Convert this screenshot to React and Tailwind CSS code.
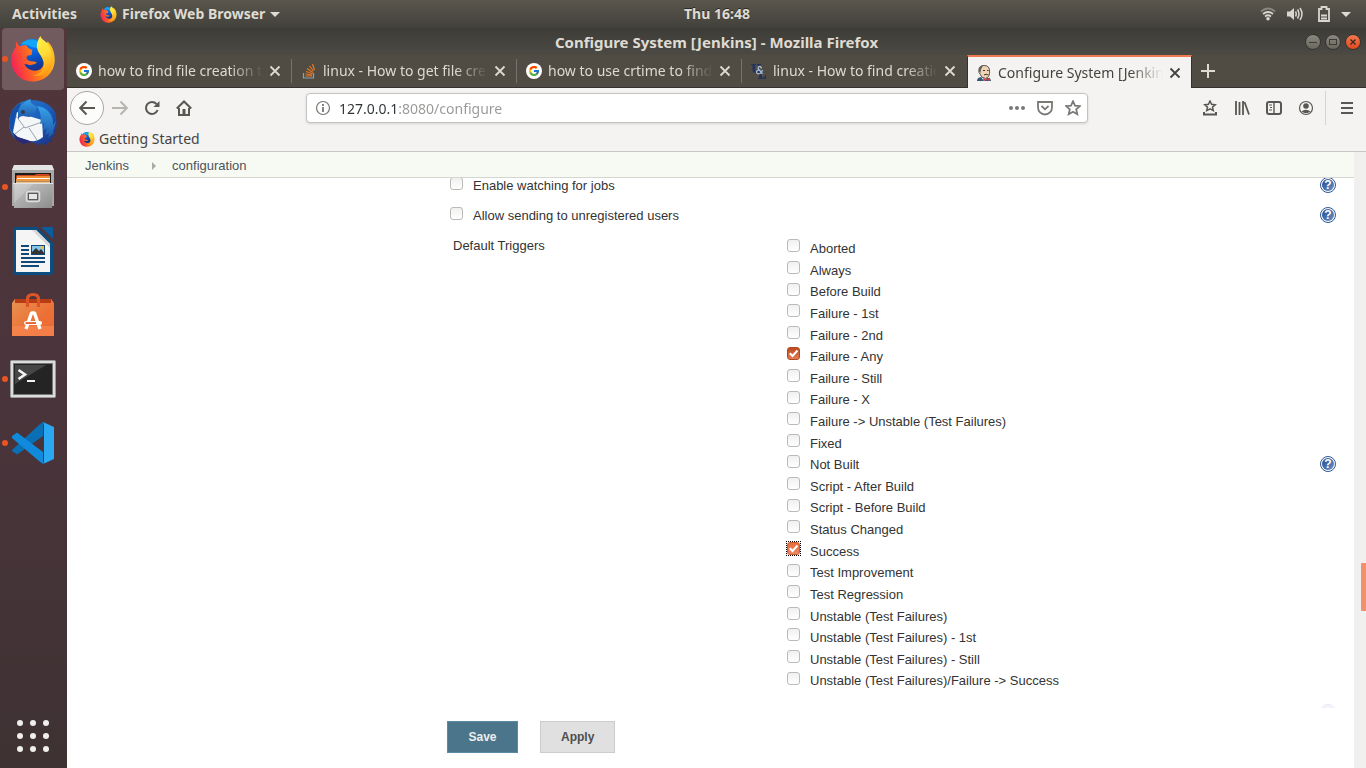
import { FcGoogle } from "react-icons/fc";

const UI = "font-['Noto_Sans','Open_Sans',sans-serif]";

function Firefox({ id, className }) {
  return (
    <svg viewBox="0 0 44 46" className={className} aria-hidden="true">
      <defs>
        <linearGradient id={id + "-globe"} x1="0.3" y1="0" x2="0.6" y2="1">
          <stop offset="0" stopColor="#0a84f5" />
          <stop offset="0.35" stopColor="#0a6bea" />
          <stop offset="0.8" stopColor="#103a9a" />
          <stop offset="1" stopColor="#2a2a80" />
        </linearGradient>
        <linearGradient id={id + "-fox"} x1="0" y1="0.6" x2="1" y2="0.3">
          <stop offset="0" stopColor="#f5205c" />
          <stop offset="0.25" stopColor="#fb4a35" />
          <stop offset="0.6" stopColor="#ff8a14" />
          <stop offset="1" stopColor="#ffc524" />
        </linearGradient>
        <linearGradient id={id + "-tail"} x1="0.2" y1="0" x2="0.5" y2="1">
          <stop offset="0" stopColor="#fff04a" />
          <stop offset="0.5" stopColor="#ffdd36" />
          <stop offset="1" stopColor="#ff9a15" />
        </linearGradient>
      </defs>
      <circle cx="22" cy="20" r="17" fill={"url(#" + id + "-globe)"} />
      <path d="M10 8C14 3 23 2 28 6l-1 6c-4 0-7-1-10-3z" fill="#12a5f7" />
      <path
        d="M5.5 5C4.500 8 5 10 5 11C2 15 0 19 .3 25C1 37 10 45.500 22 45.500C34 45.500 43.700 36 43.700 24C43.700 16 41 9 36.500 5.500L31 20C34 24 34 31 28 34C22 36 15 33 13.500 28C16 27.500 19 30 22 28.500C24 27.500 26 27.500 25.500 26.500C24 25 21 26 17.500 24.500C15 23 15 20.500 17 19.500L20.500 19C21.500 17.500 20 16.500 21.500 14C18.500 13 16.500 12 15.500 9.500C12 9 10 10 9 10.500C7 9.500 6 7.500 5.500 5Z"
        fill={"url(#" + id + "-fox)"}
      />
      <path
        d="M29.500 0C25 6 25 12 28 17C32 22 34 28 32 32C30 37 26 39 22 40C33 41 39 35 40 27C42.500 22 40 11 36 7C33 4 30 3 29.500 0Z"
        fill={"url(#" + id + "-tail)"}
      />
    </svg>
  );
}

function Thunderbird() {
  return (
    <svg viewBox="0 0 48 48" className="size-12" aria-hidden="true">
      <defs>
        <linearGradient id="tb-a" x1="0" y1="0" x2="1" y2="1">
          <stop offset="0" stopColor="#2b7fd8" />
          <stop offset="0.5" stopColor="#1c5fbd" />
          <stop offset="1" stopColor="#1b2b7d" />
        </linearGradient>
        <linearGradient id="tb-b" x1="0" y1="0" x2="0" y2="1">
          <stop offset="0" stopColor="#37a3ea" />
          <stop offset="1" stopColor="#1e55a8" />
        </linearGradient>
      </defs>
      <path d="M0 24C0 12 8 3 16 2L20 0L19 2C30-1 42 5 46 13C49 23 48 34 42 40L43 43L38 43L38 46L32 44L30 47L27 44L8 41C3 37 0 31 0 24Z" fill="url(#tb-a)" />
      <path d="M0 22C1 14 5 7 12 4L10 11C7 15 5 20 4 34C1 30 0 27 0 22Z" fill="#1550a8" />
      <path d="M8 13L13 15L33 21L34 38C28 43 22 43 18 41L8 38L4 33Z" fill="#f5f6f8" />
      <path d="M7 17L16 29L33 23M15 28L6 35M20 29L28 41" fill="none" stroke="#9aa3b0" strokeWidth="1" />
      <path d="M4 34L9 38L24 43L14 45L7 41Z" fill="#2a2a78" />
      <path d="M9 12C11 5 17 2 22 0C20 5 25 5 28 8C27 12 26 16 20 18C16 18 13 15 9 20Z" fill="url(#tb-b)" />
      <path d="M28 7C37 8 45 15 44 26L47 22L44 33L45 34L39 39L40 34L36 36L38 29L34 32L35 24L31 25C33 18 31 12 28 7Z" fill="url(#tb-b)" />
      <circle cx="14" cy="13" r="2" fill="#333b48" />
    </svg>
  );
}

function Files() {
  return (
    <svg viewBox="0 0 44 46" className="h-[46px] w-11" aria-hidden="true">
      <defs>
        <linearGradient id="fl-a" x1="0" y1="0" x2="1" y2="1">
          <stop offset="0" stopColor="#c9c9c9" />
          <stop offset="1" stopColor="#8c8c8c" />
        </linearGradient>
      </defs>
      <path d="M3 1h38l2 5v36H1V6z" fill="#a8a8a8" />
      <path d="M3 1h38l2 5H1z" fill="#e4e4e4" />
      <rect x="4" y="9" width="36" height="11" fill="#1d1b1a" />
      <path d="M5 12L6 11H24L25 10H38L39 12V15H5Z" fill="#c9491c" />
      <rect x="6" y="12" width="33" height="2" fill="#ef8a35" />
      <rect x="6" y="14" width="33" height="1" fill="#fff" />
      <rect x="5" y="15" width="34" height="2.500" fill="#f0963e" />
      <rect x="5" y="17.500" width="34" height="2" fill="#e9c48f" />
      <path d="M2 19h40l-1 25H3z" fill="url(#fl-a)" />
      <path d="M2 19h40v1H2z" fill="#e2e2e2" />
      <path d="M4 20h18L9 33l-6 6z" fill="#fff" opacity=".18" />
      <rect x="15.500" y="27.500" width="13" height="10" rx="2" fill="#999" stroke="#dedede" strokeWidth="1.500" />
      <rect x="17.500" y="29.500" width="9" height="6" fill="#e6e6e6" stroke="#5c5c5c" />
    </svg>
  );
}

function Writer() {
  return (
    <svg viewBox="0 0 42 50" className="h-[50px] w-[42px]" aria-hidden="true">
      <path d="M4 1H25L41 17V46Q41 49 38 49H4Q1 49 1 46V4Q1 1 4 1Z" fill="#0b4d80" />
      <path d="M29 1H41V13Z" fill="#0a5c9c" />
      <path d="M4 4H24L38 18V46H4Z" fill="#f5f5f5" />
      <path d="M24 4L38 18V22L20 4Z" fill="#d7d7d7" />
      <path d="M9 20h8M9 24h8M9 28h8M9 32h24M9 36h24M9 40h18" stroke="#114a78" strokeWidth="2" />
      <rect x="19.500" y="19.500" width="13" height="9" fill="#87c5ec" stroke="#114a78" />
      <path d="M20 28v-2l4-4 3 3 2-2 3 4v1z" fill="#333" />
      <circle cx="30" cy="21.500" r="1.500" fill="#f2c230" />
    </svg>
  );
}

function Software() {
  return (
    <svg viewBox="0 0 44 46" className="h-[46px] w-11" aria-hidden="true">
      <defs>
        <linearGradient id="sw-a" x1="0" y1="0" x2="1" y2="1">
          <stop offset="0" stopColor="#e69452" />
          <stop offset="0.6" stopColor="#ec7035" />
          <stop offset="1" stopColor="#ec6a33" />
        </linearGradient>
      </defs>
      <path d="M3 7H41V12H3Z" fill="#b83c13" />
      <path d="M1 11L4 7V11H40V7L43 11V44H1Z" fill="url(#sw-a)" />
      <path d="M1 34H43V44H1Z" fill="#fa8a55" opacity=".6" />
      <path d="M16.500 15V7Q16.500 2.500 22 2.500Q27.500 2.500 27.500 7V15" fill="none" stroke="#dd5527" strokeWidth="3.200" />
      <path d="M15 37L20.500 21H23.500L29 37" fill="none" stroke="#fff" strokeWidth="3.400" strokeLinejoin="bevel" />
      <rect x="13" y="29" width="18" height="4" rx="2" fill="#fff" />
      <rect x="14.500" y="30.200" width="10.500" height="1.800" fill="#e95a25" />
    </svg>
  );
}

function Terminal() {
  return (
    <svg viewBox="0 0 46 38" className="h-[38px] w-[46px]" aria-hidden="true">
      <rect x=".5" y=".5" width="45" height="37" rx="1" fill="#dcdcdc" stroke="#9a9a9a" />
      <rect x="3.500" y="3.500" width="39" height="31" fill="#242424" stroke="#777" />
      <path d="M5 5H36L5 24Z" fill="#555" opacity=".7" />
      <path d="M8.500 10L15 14.500L8.500 19" fill="none" stroke="#f3f3f3" strokeWidth="2.600" />
      <rect x="17" y="20" width="8" height="2" fill="#f3f3f3" />
    </svg>
  );
}

function VsCode() {
  return (
    <svg viewBox="0 0 42 42" className="size-[42px]" aria-hidden="true">
      <path d="M0 28L27 3L31 0V14L5 32.500L0 29Z" fill="#0a6fb5" />
      <path d="M0 14L5 10.500L31 30V42L27 39L0 16Z" fill="#118adb" />
      <path d="M31 0L42 5V37L31 42Q32 41 32 38V4Q32 1 31 0Z" fill="#2aa8f2" />
    </svg>
  );
}

const dock = [
  { name: "Firefox", icon: <Firefox id="dock" className="h-[46px] w-11" />, running: true, active: true },
  { name: "Thunderbird", icon: <Thunderbird /> },
  { name: "Files", icon: <Files />, running: true },
  { name: "LibreOffice Writer", icon: <Writer /> },
  { name: "Ubuntu Software", icon: <Software /> },
  { name: "Terminal", icon: <Terminal />, running: true },
  { name: "Visual Studio Code", icon: <VsCode />, running: true },
];

function Dock() {
  return (
    <nav aria-label="Dock" className="flex w-[67px] shrink-0 flex-col bg-gradient-to-b from-[#51363b] via-[#4a343b] to-[#3e3233] pb-[13px]">
      <div className="flex flex-col gap-[2px]">
        {dock.map((d) => (
          <button
            key={d.name}
            aria-label={d.name}
            className={
              "relative mx-[2px] flex h-[62px] w-[62px] items-center justify-center rounded " +
              (d.active ? "bg-[#715b5f]" : "")
            }
          >
            {d.running && <span className="absolute top-7 left-0 size-[6px] rounded-full bg-[#e95420]" />}
            {d.icon}
          </button>
        ))}
      </div>
      <button aria-label="Show Applications" className="mx-[14px] mt-auto grid size-[38px] grid-cols-3 place-items-center">
        {Array.from({ length: 9 }, (_, i) => (
          <span key={i} className="size-[6px] rounded-full bg-[#f0efee]" />
        ))}
      </button>
    </nav>
  );
}

function TopBar() {
  return (
    <header className="grid h-7 shrink-0 grid-cols-[1fr_auto_1fr] items-center bg-gradient-to-b from-[#5a564d] to-[#42413b] px-3 text-sm font-bold text-[#dfdbd2] [text-shadow:0_-1px_0_#2c2b28]">
      <div className="flex items-center">
        <button>Activities</button>
        <button className="ml-[23px] flex items-center gap-[5px]">
          <Firefox id="bar" className="size-[17px]" />
          Firefox Web Browser
          <svg viewBox="0 0 10 5" className="h-[5px] w-[10px]" aria-hidden="true">
            <path d="M0 0H10L5 5Z" fill="#dfdbd2" />
          </svg>
        </button>
      </div>
      <time className="pl-[68px]">Thu 16:48</time>
      <div className="flex items-center justify-end gap-[11px] pr-[3px]">
        <svg viewBox="0 0 16 14" className="h-[14px] w-4" aria-label="Wi-Fi" fill="none" stroke="#d9d6cf" strokeWidth="1.800">
          <path d="M1 4.500Q8-1.500 15 4.500" stroke="#8a877f" />
          <path d="M3 7Q8 3 13 7M5 9.500Q8 7 11 9.500" />
          <circle cx="8" cy="11.800" r="1.800" fill="#d9d6cf" stroke="none" />
        </svg>
        <svg viewBox="0 0 16 14" className="h-[14px] w-4" aria-label="Volume" fill="none" stroke="#d9d6cf" strokeWidth="1.500">
          <path d="M0 4.500H3L7 1V13L3 9.500H0Z" fill="#d9d6cf" stroke="none" />
          <path d="M8.500 4.500Q10 7 8.500 9.500M10.500 2.500Q13.500 7 10.500 11.500M13 1Q17 7 13 13" />
        </svg>
        <svg viewBox="0 0 12 16" className="ml-1 h-4 w-3" aria-label="Battery" fill="none" stroke="#d9d6cf" strokeWidth="1.800">
          <path d="M1 3H3.500V1H8.500V3H11V15H1Z" />
          <path d="M3 9.500H9M3 12.500H9" />
        </svg>
        <svg viewBox="0 0 10 5" className="h-[5px] w-[10px]" aria-hidden="true">
          <path d="M0 0H10L5 5Z" fill="#dfdbd2" />
        </svg>
      </div>
    </header>
  );
}

function StackOverflow() {
  return (
    <svg viewBox="0 0 16 16" className="size-4" aria-hidden="true" fill="none">
      <path d="M2.500 10V15H12.500V10" stroke="#8fa0ab" strokeWidth="1.200" />
      <path d="M4.500 13H11M4.500 11L11 12M5 8.500L11.500 10.800M6 5.500L12 9.500M8.500 3L12.500 8M11.500 1L13.500 7" stroke="#e87722" strokeWidth="1.200" />
    </svg>
  );
}

function UnixLinux() {
  return (
    <svg viewBox="0 0 16 16" className="size-4" aria-hidden="true">
      <path d="M0 1H5V2H4V7Q4 8.500 5.500 8.500Q7 8.500 7 7V2H6V1H10V2H9V7Q9 10 5.500 10Q1.500 10 1.500 7V2H0Z" fill="#22345c" />
      <path d="M7 8H12V9H11V14.500H13Q14 14.500 14 12H15V16H7V15H8V9H7Z" fill="#22345c" />
      <path d="M10.500 5.500Q10 3.500 8.500 3.500Q6.500 4 7.500 6L11.500 11M8 6.500Q5 8 5.500 9.500Q6.500 11.500 9 10.500Q11 9 11.500 7" fill="none" stroke="#a9bbd6" strokeWidth="1.300" />
    </svg>
  );
}

function JenkinsFace() {
  return (
    <svg viewBox="0 0 16 16" className="size-4" aria-hidden="true">
      <path d="M1 16Q1 12.500 5 12L12 13Q15 13.500 15 16Z" fill="#31587a" />
      <path d="M5 12L8 16L11 13.500Z" fill="#fff" />
      <path d="M3 5Q3 .5 8 .5Q13 .5 13.500 5Q14.500 12 9.500 13.500Q5 13 4 9Q2.500 8 3 5Z" fill="#efd3b5" stroke="#3a3230" strokeWidth=".8" />
      <path d="M2.500 6Q2.500 1 7 .5L5 4.500L4.500 8Z" fill="#68615b" />
      <path d="M7 5.500H9M11 5.500H12.500M8 10Q10 8.500 12.500 10" stroke="#3a3230" fill="none" />
      <path d="M7 13L10 14.500L14 12.500V16L10.500 15L7.500 16Z" fill="#d33833" />
    </svg>
  );
}

const google = (
  <span className="flex size-4 items-center justify-center rounded-full bg-white">
    <FcGoogle className="size-3" />
  </span>
);

const tabs = [
  { title: "how to find file creation time", icon: google },
  { title: "linux - How to get file creation", icon: <StackOverflow /> },
  { title: "how to use crtime to find", icon: google },
  { title: "linux - How to find creation", icon: <UnixLinux /> },
  { title: "Configure System [Jenkins]", icon: <JenkinsFace />, active: true },
];

function Cross({ className }) {
  return (
    <svg viewBox="0 0 12 12" className={className} aria-hidden="true">
      <path d="M1.500 1.500L10.500 10.500M10.500 1.500L1.500 10.500" stroke="currentColor" strokeWidth="1.800" />
    </svg>
  );
}

function TitleBar() {
  const btn = "flex size-4 items-center justify-center rounded-full border border-[#35342f] ";
  const grey = btn + "bg-gradient-to-b from-[#8b887f] to-[#6a675f] text-[#3c3b37]";
  return (
    <div className="grid h-[27px] grid-cols-[1fr_auto_1fr] items-center bg-gradient-to-b from-[#3d3c37] to-[#4c4a43]">
      <h1 className="col-start-2 text-[15px] leading-[22px] font-bold text-[#dfdbd2]">Configure System [Jenkins] - Mozilla Firefox</h1>
      <div className="flex justify-end gap-1 pr-[5px]">
        <button aria-label="Minimize" className={grey}>
          <svg viewBox="0 0 16 16" className="size-4 shrink-0"><path d="M4 8.500H12" stroke="currentColor" /></svg>
        </button>
        <button aria-label="Maximize" className={grey}>
          <svg viewBox="0 0 16 16" className="size-4 shrink-0"><rect x="4.500" y="5.500" width="7" height="5" fill="none" stroke="currentColor" /></svg>
        </button>
        <button aria-label="Close" className={btn + "bg-gradient-to-b from-[#f4764f] to-[#e0491a] text-[#3c2a20]"}>
          <svg viewBox="0 0 16 16" className="size-4 shrink-0"><path d="M5.500 5.500L10.500 10.500M10.500 5.500L5.500 10.500" stroke="currentColor" strokeWidth="1.400" /></svg>
        </button>
      </div>
    </div>
  );
}

function TabStrip() {
  return (
    <div className="flex h-[33px] items-stretch bg-[#504c44]">
      {tabs.map((t, i) => (
        <div
          key={i}
          className={
            "flex min-w-0 shrink basis-[225px] items-center text-sm " +
            (t.active
              ? "border-x border-t-2 border-x-[#33322e] border-t-[#ee7a52] bg-[#f4f3f1] pr-[10px] pl-2 text-[#45433f]"
              : "border-b border-[#33322e] pr-[11px] pl-[9px] text-[#dedad1]")
          }
        >
          <button className="flex min-w-0 flex-1 items-center gap-[6px] overflow-hidden text-left">
            <span className="shrink-0">{t.icon}</span>
            <span className="flex-1 overflow-hidden whitespace-nowrap [mask-image:linear-gradient(90deg,#000_80%,transparent)]">
              {t.title}
            </span>
          </button>
          <button aria-label="Close tab" className="ml-[6px] shrink-0">
            <Cross className="size-3" />
          </button>
          {i < 3 && <span className="-mr-[11px] ml-[10px] h-6 w-px shrink-0 bg-[#77736a]" />}
        </div>
      ))}
      <div className="flex flex-1 items-center border-b border-[#33322e] pl-2 text-[#dedad1]">
        <button aria-label="New tab">
          <svg viewBox="0 0 16 16" className="size-4"><path d="M1 8H15M8 1V15" stroke="currentColor" strokeWidth="2" /></svg>
        </button>
      </div>
    </div>
  );
}

function NavIcon({ label, children, className = "" }) {
  return (
    <button aria-label={label} className={"flex size-8 items-center justify-center " + className}>
      <svg viewBox="0 0 16 16" className="size-4" fill="none" stroke="currentColor" strokeWidth="2">
        {children}
      </svg>
    </button>
  );
}

const star = "M8 1.200L10 5.600L14.900 6.100L11.200 9.400L12.300 14.200L8 11.700L3.700 14.200L4.800 9.400L1.100 6.100L6 5.600Z";

function Toolbar() {
  return (
    <div className="flex h-10 items-center bg-[#f4f3f1] px-[3px] text-[#595753]">
      <div className="flex items-center">
        <button aria-label="Back" className="flex size-[34px] items-center justify-center rounded-full border border-[#a9a8a5] bg-[#fcfcfb]">
          <svg viewBox="0 0 16 16" className="size-4" fill="none" stroke="currentColor" strokeWidth="2">
            <path d="M16 8H1.500M7.500 1.500L1.200 8L7.500 14.500" />
          </svg>
        </button>
        <NavIcon label="Forward" className="text-[#b7b5b2]"><path d="M0 8H14.500M8.500 1.500L14.800 8L8.500 14.500" /></NavIcon>
        <NavIcon label="Reload">
          <path d="M13.600 10A6 6 0 1 1 12.500 4" />
          <path d="M15.500 1V7H9.500Z" fill="currentColor" stroke="none" />
        </NavIcon>
        <NavIcon label="Home">
          <path d="M.8 8.500L8 1.500L15.200 8.500M3 8V15H13V8" />
          <path d="M6.500 14V9H9.500V14Z" fill="currentColor" stroke="none" />
        </NavIcon>
      </div>
      <label className="mx-[106px] flex h-[30px] min-w-0 flex-1 items-center gap-2 rounded border border-[#c5c3bf] bg-white pr-[6px] pl-2 shadow-sm">
        <svg viewBox="0 0 16 16" className="size-4 shrink-0 text-[#797774]" fill="none" stroke="currentColor">
          <circle cx="8" cy="8" r="6.500" strokeWidth="1.200" />
          <path d="M8 7V12M8 4V6" strokeWidth="1.800" />
        </svg>
        <input
          aria-label="Address"
          defaultValue="127.0.0.1:8080/configure"
          className="min-w-0 flex-1 bg-[linear-gradient(90deg,#2e3436_60px,#989896_60px)] bg-clip-text pt-px text-sm text-transparent outline-none"
        />
        <span className="flex shrink-0 items-center gap-3 text-[#7b7976]">
          <svg viewBox="0 0 16 16" className="size-4" fill="currentColor"><circle cx="2" cy="8" r="2" /><circle cx="8" cy="8" r="2" /><circle cx="14" cy="8" r="2" /></svg>
          <svg viewBox="0 0 16 16" className="size-4" fill="none" stroke="currentColor" strokeWidth="1.800"><path d="M1 2H15V7.500A7 7 0 0 1 1 7.500ZM4.500 6L8 9.300L11.500 6" /></svg>
          <svg viewBox="0 0 16 16" className="size-4" fill="none" stroke="currentColor" strokeWidth="1.800"><path d={star} /></svg>
        </span>
      </label>
      <div className="flex items-center">
        <NavIcon label="Bookmarks">
          <path d="M8 1L9.600 4.300L13.200 4.700L10.500 7.100L11.300 10.600L8 8.800L4.700 10.600L5.500 7.100L2.800 4.700L6.400 4.300Z" strokeWidth="1.500" />
          <path d="M2 12V14.500H14V12" />
        </NavIcon>
        <NavIcon label="Library"><path d="M2 1V15M5.500 2V15M9 1V15M10.500 2L15 14.500" strokeWidth="1.800" /></NavIcon>
        <NavIcon label="Sidebar">
          <rect x="1" y="2" width="14" height="12" rx="2" />
          <path d="M8 2V14" strokeWidth="1.400" /><path d="M3 5H6M4 7.500H6M3 10H6" strokeWidth="1" />
        </NavIcon>
        <NavIcon label="Account">
          <circle cx="8" cy="8" r="6.500" strokeWidth="1.200" />
          <circle cx="8" cy="6" r="2.800" fill="currentColor" stroke="none" />
          <path d="M3.500 11.500Q8 8 12.500 11.500Q8 15 3.500 11.500Z" fill="currentColor" stroke="none" />
        </NavIcon>
        <span className="ml-[3px] h-[34px] w-px bg-[#d6d4d0]" />
        <NavIcon label="Menu" className="ml-[5px]"><path d="M2 3H14M2 8H14M2 13H14" /></NavIcon>
      </div>
    </div>
  );
}

function Help() {
  return (
    <button aria-label="Help" className="flex size-4 items-center justify-center rounded-full border border-[#2f5596] bg-white">
      <span className="flex size-3 items-center justify-center rounded-full bg-gradient-to-br from-[#234a8c] to-[#6d94c8] text-xs leading-none font-bold text-white">
        ?
      </span>
    </button>
  );
}

function Check({ children, checked, focused }) {
  return (
    <label className="flex items-center gap-[10px]">
      <span className={"relative mb-[6px] flex size-[13px] " + (focused ? "outline outline-1 outline-dotted outline-black" : "")}>
        <input
          type="checkbox"
          defaultChecked={checked}
          className={
            "peer size-[13px] appearance-none rounded-[3px] border border-[#bcbab7] bg-gradient-to-b from-[#f0f0f0] to-white outline-none " +
            (focused
              ? "checked:border-[#cf5a2c] checked:from-[#ea6b3a] checked:to-[#ea8a66]"
              : "checked:border-[#b04a20] checked:from-[#bd4a1c] checked:to-[#e47c55]")
          }
        />
        <svg viewBox="0 0 13 13" className="pointer-events-none absolute inset-0 hidden peer-checked:block" aria-hidden="true">
          <path d="M2.800 6.200L5.500 9L10.500 3.500" fill="none" stroke="#fff" strokeWidth="2" />
        </svg>
      </span>
      {children}
    </label>
  );
}

const triggers = [
  "Aborted", "Always", "Before Build", "Failure - 1st", "Failure - 2nd", "Failure - Any", "Failure - Still",
  "Failure - X", "Failure -> Unstable (Test Failures)", "Fixed", "Not Built", "Script - After Build",
  "Script - Before Build", "Status Changed", "Success", "Test Improvement", "Test Regression",
  "Unstable (Test Failures)", "Unstable (Test Failures) - 1st", "Unstable (Test Failures) - Still",
  "Unstable (Test Failures)/Failure -> Success",
];

function OptionRow({ children }) {
  return (
    <div className="flex h-[30px] items-center justify-between">
      <div className="pt-[2px]">{children}</div>
      <Help />
    </div>
  );
}

function Page() {
  return (
    <main className="flex min-h-0 min-w-0 flex-1 flex-col bg-white font-['Liberation_Sans',Arial,sans-serif] text-[13px] text-[#333]">
      <nav aria-label="Breadcrumb" className="flex h-[26px] shrink-0 items-center border-b border-[#d3d7cf] bg-[#f6faf2] pt-[2px] pl-[18px] text-[#4d545d]">
        <a href="#jenkins">Jenkins</a>
        <svg viewBox="0 0 4 8" className="mr-4 ml-[23px] h-2 w-1" aria-hidden="true"><path d="M0 0L4 4L0 8Z" fill="#aaa" /></svg>
        <a href="#configuration">configuration</a>
      </nav>
      <form className="relative min-h-0 flex-1 overflow-hidden pr-[18px] pl-[383px]">
        <div className="-mt-2">
          <OptionRow>
            <Check>Enable watching for jobs</Check>
          </OptionRow>
          <OptionRow>
            <Check>Allow sending to unregistered users</Check>
          </OptionRow>
        </div>
        <fieldset className="flex items-start">
          <legend className="float-left w-[337px] shrink-0 pl-[3px] leading-8">Default Triggers</legend>
          <div className="mt-2 mb-[5px] grid h-[454px] flex-1 auto-rows-fr">
            {triggers.map((t) => (
              <Check key={t} checked={t === "Failure - Any" || t === "Success"} focused={t === "Success"}>
                {t}
              </Check>
            ))}
          </div>
          <span className="self-center"><Help /></span>
        </fieldset>
        <OptionRow>
          <span className="pl-[3px]">Content Token Reference</span>
        </OptionRow>
        <div className="pointer-events-none absolute inset-x-0 bottom-0 h-2 bg-white/85" />
      </form>
      <div className="flex h-[60px] shrink-0 items-center gap-[22px] pb-[2px] pl-[380px] text-xs font-bold">
        <button className="h-8 min-w-[71px] border border-[#5a8aa3] bg-[#4b758b] px-5 text-[#eee]">Save</button>
        <button className="h-8 min-w-[75px] border border-[#ccc] bg-[#e0e0e0] px-5 text-[#4d4d4d]">Apply</button>
      </div>
    </main>
  );
}

export default function App() {
  return (
    <div className={"flex h-screen flex-col overflow-hidden " + UI}>
      <TopBar />
      <div className="flex min-h-0 flex-1">
        <Dock />
        <section className="flex min-w-0 flex-1 flex-col">
          <TitleBar />
          <TabStrip />
          <Toolbar />
          <div className="flex h-6 items-center border-b border-[#c8c6c2] bg-[#f4f3f1] pb-[2px] pl-3 text-sm text-[#45433f]">
            <a href="#getting-started" className="flex items-center gap-1">
              <Firefox id="bm" className="size-4" />
              Getting Started
            </a>
          </div>
          <div className="flex min-h-0 flex-1">
            <Page />
            <div className="flex w-3 shrink-0 flex-col items-end bg-[#f1f0ee]">
              <div className="grow-[411]" />
              <div className="h-12 w-[5px] rounded-l-[1px] bg-[#f2906b]" />
              <div className="grow-[157]" />
            </div>
          </div>
        </section>
      </div>
    </div>
  );
}
